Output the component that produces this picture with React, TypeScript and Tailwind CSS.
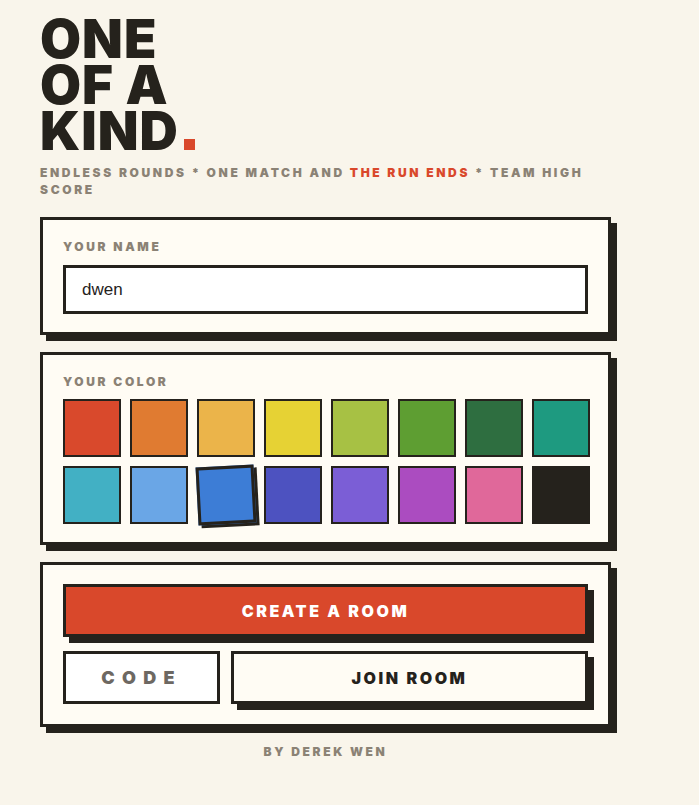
import React from "react";

const colors = [
  "#d9492c", "#e07b31", "#ebb44a", "#e6d234", "#a7c144", "#5e9e32", "#2e6e40", "#1e9a80",
  "#42b0c4", "#6aa6e6", "#3d7dd6", "#4d52c0", "#7b5ed6", "#ab4cc0", "#e0689a", "#25221c",
];

const labelCls = "text-[12px] leading-[14px] font-black tracking-[0.22em] text-[#8b8275]";

export default function App() {
  return (
    <div className="min-h-[805px] w-full bg-[#f9f5eb] text-[#25221c] font-['Inter',sans-serif]">
      <div className="w-[571px] ml-10 pt-[16px] pb-10">
        <h1 className="text-[53px] leading-[46px] font-black tracking-[1px] text-[#25221c]">
          ONE
          <br />
          OF A
          <br />
          KIND
          <span className="inline-block overflow-hidden w-[11px] h-[11px] ml-[5px] bg-[#d9482b] text-transparent text-[1px] leading-none align-baseline">.</span>
        </h1>
        <p className="mt-[10px] pr-2 text-[12px] leading-[17px] font-black tracking-[0.22em] text-[#8b8275]">
          ENDLESS ROUNDS * ONE MATCH AND <span className="text-[#d9482b]">THE RUN ENDS</span> * TEAM HIGH SCORE
        </p>

        <div className="mt-[19px] flex flex-col gap-[17px]">
          <div className="border-[3px] border-[#25221c] bg-[#fffcf4] shadow-[6px_6px_0_#25221c] px-5 pt-5 pb-[18px]">
            <div className={labelCls}>YOUR NAME</div>
            <div className="mt-[11px] h-[49px] border-[3px] border-[#25221c] bg-white flex items-center pl-4 text-[17px] font-['Liberation_Sans',sans-serif] text-[#25221c]">
              dwen
            </div>
          </div>

          <div className="border-[3px] border-[#25221c] bg-[#fffcf4] shadow-[6px_6px_0_#25221c] px-5 pt-5 pb-[18px]">
            <div className={labelCls}>YOUR COLOR</div>
            <div className="mt-[10px] grid grid-cols-8 gap-[9px] w-[527px]">
              {colors.map((c, i) =>
                i === 10 ? (
                  <div
                    key={i}
                    className="h-[58px] border-[3px] border-[#25221c] shadow-[3px_3px_0_#25221c] -rotate-3"
                    style={{ backgroundColor: c }}
                  />
                ) : (
                  <div
                    key={i}
                    className="h-[58px] border-2 border-[#25221c]"
                    style={{ backgroundColor: c }}
                  />
                )
              )}
            </div>
          </div>

          <div className="border-[3px] border-[#25221c] bg-[#fffcf4] shadow-[6px_6px_0_#25221c] px-5 pt-[19px] pb-5">
            <div className="h-[53px] border-[3px] border-[#25221c] bg-[#d9482b] shadow-[6px_6px_0_#25221c] flex items-center justify-center text-white text-[16px] font-black tracking-[0.16em]">
              CREATE A ROOM
            </div>
            <div className="mt-[14px] flex gap-[11px]">
              <div className="w-[157px] h-[53px] border-[3px] border-[#25221c] bg-white flex items-center justify-center text-[18px] font-black tracking-[0.4em] text-[#6d6862]">
                CODE
              </div>
              <div className="flex-1 h-[53px] border-[3px] border-[#25221c] bg-[#fffcf4] shadow-[6px_6px_0_#25221c] flex items-center justify-center text-[16px] font-black tracking-[0.16em] text-[#25221c]">
                JOIN ROOM
              </div>
            </div>
          </div>
        </div>

        <div className={"mt-[18px] text-center " + labelCls}>BY DEREK WEN</div>
      </div>
    </div>
  );
}
